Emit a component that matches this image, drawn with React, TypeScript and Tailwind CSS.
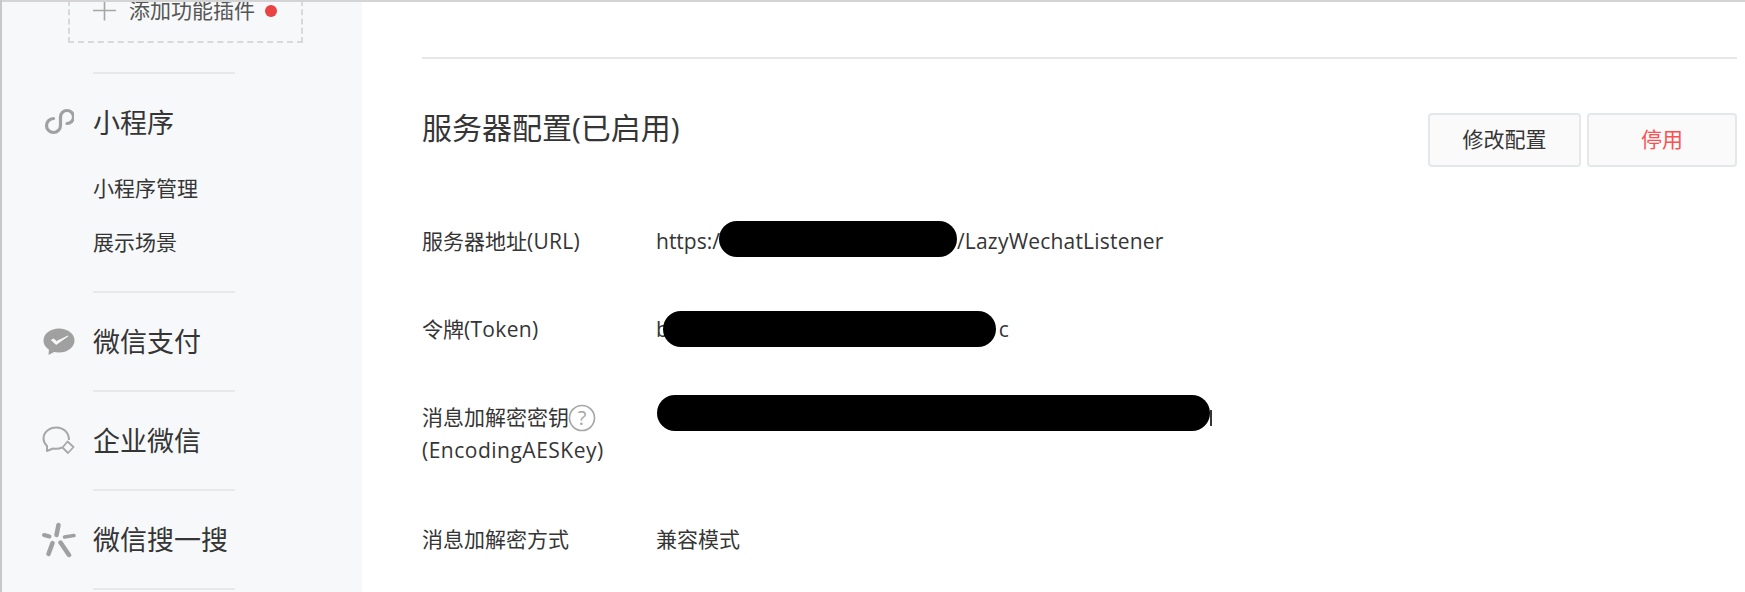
const cjk = { fontFamily: '"Open Sans","Noto Sans CJK SC",sans-serif' };

function MiniIcon() {
  return (
    <svg width="30" height="28" viewBox="0 0 30 28" fill="none" stroke="#a0a0a0" strokeWidth="3.2" strokeLinecap="round">
      <path d="M9.5 10.5 A 7 7 0 1 0 16.5 17.5 V 9 A 6.5 6.5 0 1 1 23 15.5" />
    </svg>
  );
}
function PayIcon() {
  return (
    <svg width="32" height="28" viewBox="0 0 32 28">
      <ellipse cx="16" cy="12.5" rx="15.5" ry="12" fill="#a0a0a0" />
      <path d="M6 21 L5.5 27 L13 23 Z" fill="#a0a0a0" />
      <path d="M8.5 12 L13 16.5 L25 8 L13.5 13.5 L10.5 11 Z" fill="#f6f8f9" stroke="#f6f8f9" strokeWidth="1" />
    </svg>
  );
}
function WorkIcon() {
  return (
    <svg width="34" height="30" viewBox="0 0 34 30" fill="none" stroke="#a8a8a8" strokeWidth="2" strokeLinejoin="round">
      <path d="M27 14 C27 6 21 1.5 14.5 1.5 C7 1.5 1.5 6.5 1.5 12.5 C1.5 16 3.5 18.5 5 20 L5 25 L11 22.5 C14 23 17 23 20 21.5" />
      <path d="M25.5 15.5 L31.5 21 L26 27 L20.5 21.5 Z" strokeWidth="1.8" />
    </svg>
  );
}
function SearchIcon() {
  return (
    <svg width="36" height="36" viewBox="0 0 36 36" fill="none" stroke="#a0a0a0" strokeLinecap="round">
      <path d="M17.5 3 L15.5 13" strokeWidth="4.5" />
      <path d="M3 13 L8.5 14.5" strokeWidth="4" />
      <path d="M23.5 15 L33 13.5" strokeWidth="3.6" />
      <path d="M11.5 21 L7.5 32" strokeWidth="4.5" />
      <path d="M19.5 20.5 L28 33" strokeWidth="4.5" />
    </svg>
  );
}

function Divider() {
  return <div className="ml-[91px] w-[142px] h-[2px] bg-[#e6e8eb]" />;
}

function NavSection({ icon, title, h }: { icon: React.ReactNode; title: string; h: string }) {
  return (
    <div className={`relative flex items-center pl-[91px] ${h}`}>
      <span className="absolute left-[39px] top-0 bottom-0 w-[36px] flex items-center justify-center">{icon}</span>
      <span className="text-[27px] text-[#353535] leading-none">{title}</span>
    </div>
  );
}

function Row({ label, children, cls }: { label: React.ReactNode; children: React.ReactNode; cls: string }) {
  return (
    <div className={`flex text-[21px] leading-[33px] text-[#353535] ${cls}`}>
      <div className="w-[234px] shrink-0">{label}</div>
      <div className="flex items-center h-[33px] whitespace-nowrap">{children}</div>
    </div>
  );
}

function Pill({ cls }: { cls: string }) {
  return <span className={`inline-block h-[36px] rounded-[18px] bg-black shrink-0 ${cls}`} />;
}

export default function App() {
  return (
    <div className="w-[1745px] h-[592px] overflow-hidden bg-white flex border-l-[2px] border-[#c8c8c8] relative" style={cjk}>
      <div className="absolute left-0 right-0 top-0 h-[2px] bg-[#d4d4d4] z-10" />
      <aside className="w-[360px] shrink-0 h-full bg-[#f6f8f9]">
        <div className="ml-[66px] w-[235px] h-[43px] border-2 border-t-0 border-dashed border-[#d8d9dc] flex pl-[23px]">
          <svg width="24" height="20" viewBox="0 0 24 20" className="mt-[1px]" fill="none" stroke="#a6a6a6" strokeWidth="1.6">
            <path d="M0 9.5 H23 M11.5 0 V19.5" />
          </svg>
          <span className="ml-[12px] text-[21px] leading-[20px] text-[#555]">添加功能插件</span>
          <span className="ml-[10px] mt-[5px] w-[12px] h-[12px] rounded-full bg-[#e94343]" />
        </div>
        <div className="h-[29px]" />
        <Divider />
        <NavSection icon={<MiniIcon />} title="小程序" h="h-[95px] pt-[2px]" />
        <div className="pl-[91px] text-[21px] text-[#353535] leading-[54px] -mt-[8px] mb-[11px] h-[119px]">
          <div>小程序管理</div>
          <div>展示场景</div>
        </div>
        <Divider />
        <NavSection icon={<PayIcon />} title="微信支付" h="h-[97px]" />
        <Divider />
        <NavSection icon={<WorkIcon />} title="企业微信" h="h-[97px]" />
        <Divider />
        <NavSection icon={<SearchIcon />} title="微信搜一搜" h="h-[97px]" />
        <Divider />
      </aside>
      <main className="flex-1 pl-[60px] pr-[8px] pt-[57px]">
        <div className="h-[2px] bg-[#e4e6e9]" />
        <div className="flex justify-between items-start">
          <h2 className="mt-[47px] text-[30px] leading-[44px] text-[#353535] font-normal">服务器配置(已启用)</h2>
          <div className="flex gap-[6px] mt-[54px]">
            <button className="w-[153px] h-[54px] border-2 border-[#e4e8eb] rounded-[4px] bg-[#fafafa] text-[21px] text-[#353535]">修改配置</button>
            <button className="w-[150px] h-[54px] border-2 border-[#e4e8eb] rounded-[4px] bg-[#fafafa] text-[21px] text-[#fa5151]">停用</button>
          </div>
        </div>
        <Row label={<>服务器地址<span className="tracking-[0.3px]">(URL)</span></>} cls="mt-[58px]">
          <span>https:/</span>
          <Pill cls="w-[238px] -ml-[1px] -translate-y-[3px]" />
          <span className="tracking-[0.2px]">/LazyWechatListener</span>
        </Row>
        <Row label={<>令牌<span className="tracking-[0.3px]">(Token)</span></>} cls="mt-[55px]">
          <span>b</span>
          <Pill cls="w-[333px] -ml-[6px] -translate-y-[1px]" />
          <span className="ml-[3px]">c</span>
        </Row>
        <div className="mt-[55px] flex text-[21px] leading-[33px] text-[#353535]">
          <div className="w-[234px] shrink-0">
            <div className="flex items-center">
              消息加解密密钥
              <svg width="28" height="28" viewBox="0 0 28 28" className="-ml-[1px]">
                <circle cx="14" cy="14" r="12.5" fill="none" stroke="#a6a6a6" strokeWidth="1.6" />
                <text x="14" y="21" textAnchor="middle" fontSize="20" fill="#a6a6a6">?</text>
              </svg>
            </div>
            <div className="tracking-[0.5px]">(EncodingAESKey)</div>
          </div>
          <div className="flex items-center h-[33px]">
            <Pill cls="w-[553px] ml-[1px] -translate-y-[5px]" />
            <span className="w-[2px] h-[16px] bg-[#353535]" />
          </div>
        </div>
        <Row label="消息加解密方式" cls="mt-[56px]">
          兼容模式
        </Row>
      </main>
    </div>
  );
}
